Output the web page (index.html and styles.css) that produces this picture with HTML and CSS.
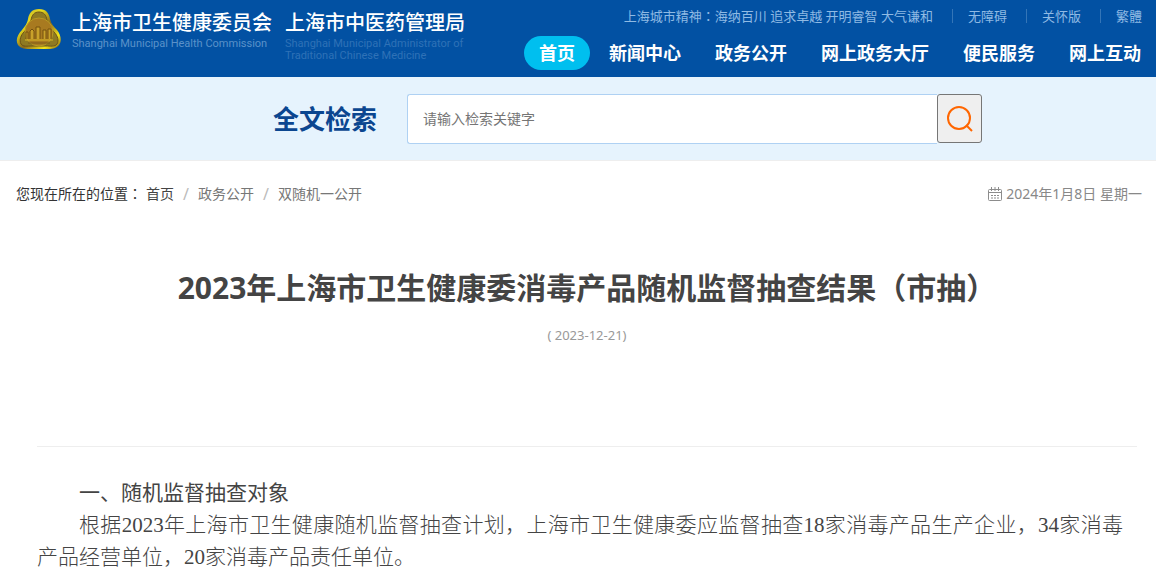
FILE: index.html
```html
<!DOCTYPE html>
<html lang="zh-CN">
<head>
  <meta charset="UTF-8">
  <meta name="viewport" content="width=device-width, initial-scale=1.0">
  <title>2023年上海市卫生健康委消毒产品随机监督抽查结果（市抽）</title>
  <link rel="stylesheet" href="styles.css">
</head>
<body>
  <header class="header">
    <a href="#" class="brand">
      <svg class="emblem" viewBox="0 0 46 42" aria-hidden="true">
        <defs>
          <linearGradient id="gold" x1="0" y1="0" x2="1" y2="1">
            <stop offset="0" stop-color="#a5963c"/>
            <stop offset="0.3" stop-color="#e8dc1c"/>
            <stop offset="0.55" stop-color="#8a6a1c"/>
            <stop offset="0.8" stop-color="#f2e41a"/>
            <stop offset="1" stop-color="#7d5a18"/>
          </linearGradient>
        </defs>
        <path d="M23 1C30 1 33 5 34 11C35 16 38 19 41 22C45 27 46 33 43 37C40 41 35 41 31 41H15C10 41 5 41 2 37C-1 32 2 26 6 22C9 18 11 16 12 11C13 5 16 1 23 1Z" fill="url(#gold)"/>
        <path d="M23 4C28 4 30 7 31 12C32 17 35 21 38 24C42 28 43 33 41 36C39 39 34 38 30 38H16C11 38 7 39 5 36C3 32 5 27 8 24C11 21 14 17 15 12C16 7 18 4 23 4Z" fill="#8f7a22" stroke="#6d5218" stroke-width="1"/>
        <circle cx="23" cy="24" r="14" fill="#a87a20" stroke="#b89a25" stroke-width="1"/>
        <path d="M10 31V24H12V31M14 31V23L16 21L18 23V31M20 31V19H24V31M27 31V22H30V31M32 31V21H35V31" fill="#c9a12a" stroke="#74500f" stroke-width="1"/>
        <path d="M9 32H37" stroke="#d8b828" stroke-width="1"/>
        <path d="M12 35H34" stroke="#7d5a18" stroke-width="1"/>
      </svg>
      <span class="brand-item">
        <span class="brand-name">上海市卫生健康委员会</span>
        <span class="brand-en">Shanghai Municipal Health Commission</span>
      </span>
      <span class="brand-item">
        <span class="brand-name">上海市中医药管理局</span>
        <span class="brand-en brand-en-sub">Shanghai Municipal Administrator of<br>Traditional Chinese Medicine</span>
      </span>
    </a>
    <div class="header-right">
      <div class="topbar">
        <span>上海城市精神<span lang="zh-TW" class="colon">：</span>海纳百川 追求卓越 开明睿智 大气谦和</span>
        <a href="#">无障碍</a>
        <a href="#">关怀版</a>
        <a href="#">繁體</a>
      </div>
      <nav class="nav">
        <a href="#" class="active">首页</a>
        <a href="#">新闻中心</a>
        <a href="#">政务公开</a>
        <a href="#">网上政务大厅</a>
        <a href="#">便民服务</a>
        <a href="#">网上互动</a>
      </nav>
    </div>
  </header>

  <form class="search">
    <label for="keyword">全文检索</label>
    <div class="search-box">
      <input type="text" id="keyword" name="keyword" placeholder="请输入检索关键字">
      <button type="submit" aria-label="搜索">
        <svg width="28" height="28" viewBox="0 0 28 28" fill="none" stroke="#ff6600" stroke-width="2">
          <circle cx="13" cy="14" r="11"/>
          <path d="M20 21L26 27"/>
        </svg>
      </button>
    </div>
  </form>

  <div class="location">
    <div class="breadcrumb">
      <span class="label">您现在所在的位置<span lang="zh-TW" class="colon">：</span></span>
      <a href="#" class="home">首页</a>
      <span class="sep">/</span>
      <a href="#">政务公开</a>
      <span class="sep">/</span>
      <a href="#">双随机一公开</a>
    </div>
    <div class="today">
      <svg width="14" height="14" viewBox="0 0 14 14" fill="none" stroke="#8c8c8c">
        <rect x="0.5" y="2.5" width="13" height="11" rx="1"/>
        <path d="M1 5.5H13M3.5 0V4M7 0V4M10.5 0V4"/>
        <path d="M3 8.5H11M3 11H11" stroke-dasharray="2 1"/>
      </svg>
      <span>2024年1月8日 星期一</span>
    </div>
  </div>

  <main class="article">
    <h1>2023年上海市卫生健康委消毒产品随机监督抽查结果（市抽）</h1>
    <p class="date">( 2023-12-21)</p>
    <div class="content">
      <h2>一、随机监督抽查对象</h2>
      <p>根据2023年上海市卫生健康随机监督抽查计划，上海市卫生健康委应监督抽查18家消毒产品生产企业，34家消毒产品经营单位，20家消毒产品责任单位。</p>
    </div>
  </main>
</body>
</html>
```
FILE: styles.css
```css
* {
  box-sizing: border-box;
}
body {
  margin: 0;
  background-color: #fff;
  color: #444;
  font-family: "Noto Sans", "Noto Sans CJK SC", sans-serif;
  font-size: 14px;
}
a {
  color: inherit;
  text-decoration: none;
}
svg {
  display: block;
}
.colon {
  font-family: "Noto Sans", "Noto Sans CJK TC", sans-serif;
}

/* header */
.header {
  display: flex;
  justify-content: space-between;
  height: 77px;
  background-color: #0251a3;
  color: #fff;
  white-space: nowrap;
}
.brand {
  display: flex;
  align-items: flex-start;
  padding: 8px 0 0 16px;
}
.emblem {
  width: 46px;
  height: 42px;
  margin-right: 10px;
}
.brand-item {
  margin-right: 13px;
}
.brand-name {
  display: block;
  font-size: 20px;
  font-weight: 500;
  line-height: 30px;
}
.brand-en {
  display: block;
  font-family: Roboto, sans-serif;
  font-size: 11px;
  line-height: 12px;
  color: #5a91c9;
}
.brand-en-sub {
  color: #2f72b7;
}
.header-right {
  display: flex;
  flex-direction: column;
  align-items: flex-end;
}
.topbar {
  display: flex;
  align-items: center;
  height: 32px;
  padding-right: 14px;
  font-size: 13px;
  line-height: 14px;
  color: #8fbae4;
}
.topbar a {
  margin-left: 19px;
  padding-left: 15px;
  border-left: 1px solid #3475b7;
}
.nav {
  display: flex;
  gap: 4px;
  padding-top: 4px;
}
.nav a {
  padding: 0 15px;
  border-radius: 17px;
  font-size: 18px;
  font-weight: 700;
  line-height: 34px;
}
.nav .active {
  background-color: #00bfef;
}

/* search */
.search {
  display: flex;
  align-items: center;
  justify-content: center;
  height: 84px;
  padding-left: 99px;
  background-color: #e6f3fd;
  border-bottom: 1px solid #eee;
}
.search label {
  margin-right: 30px;
  font-size: 26px;
  font-weight: 700;
  line-height: 36px;
  color: #0b4690;
}
.search-box {
  display: flex;
  width: 60%;
  max-width: 575px;
}
.search-box input {
  flex: 1;
  min-width: 0;
  height: 50px;
  padding: 0 15px;
  border: 1px solid #afd1f3;
  border-right: none;
  border-radius: 3px 0 0 3px;
  background-color: #fff;
  font-family: inherit;
  font-size: 14px;
  outline: none;
}
.search-box input::placeholder {
  color: #757575;
}
.search-box button {
  display: flex;
  align-items: center;
  justify-content: center;
  width: 45px;
  height: 49px;
  padding: 0;
  border: 1px solid #767676;
  border-radius: 3px;
  background-color: #efefef;
  cursor: pointer;
}

/* breadcrumb */
.location {
  display: flex;
  justify-content: space-between;
  height: 43px;
  padding: 23px 14px 0 16px;
  line-height: 20px;
}
.breadcrumb {
  display: flex;
  color: #777;
}
.breadcrumb .label {
  margin-right: 4px;
  color: #333;
}
.breadcrumb .home {
  color: #444;
}
.breadcrumb .sep {
  margin: 0 9px;
  font-size: 16px;
  color: #bbb;
}
.today {
  display: flex;
  align-items: center;
  gap: 4px;
  color: #888;
}

/* article */
.article {
  margin: 0 19px 0 37px;
}
h1 {
  margin: 64px 0 0;
  text-align: center;
  font-size: 30px;
  font-weight: 700;
  line-height: 40px;
}
.date {
  margin: 17px 0 0;
  padding-bottom: 101px;
  border-bottom: 1px solid #eee;
  text-align: center;
  font-size: 13px;
  line-height: 20px;
  color: #999;
}
.content {
  padding: 30px 14px 0 0;
  font-family: "Liberation Serif", "Noto Sans CJK SC", serif;
  font-size: 21px;
  line-height: 32px;
}
.content h2 {
  margin: 0;
  font-size: 21px;
  font-weight: 400;
  text-indent: 2em;
}
.content p {
  margin: 0;
  text-align: justify;
  text-indent: 2em;
  font-weight: 300;
}
```
